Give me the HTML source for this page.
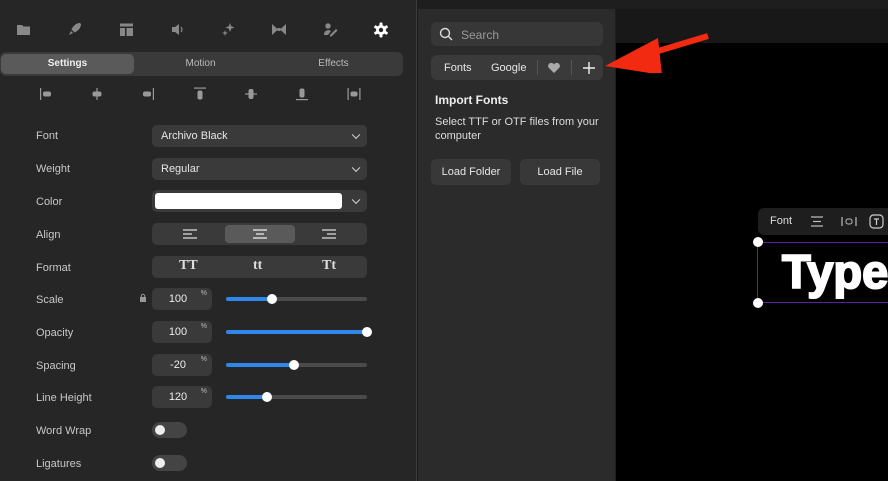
<!DOCTYPE html>
<html><head><meta charset="utf-8"><style>
*{box-sizing:border-box;margin:0;padding:0}
body{width:888px;height:481px;overflow:hidden;background:#1e1e1e;font-family:"Liberation Sans",sans-serif;position:relative;color:#ddd}
.abs{position:absolute}
#left{left:0;top:0;width:416px;height:481px;background:#262626}
#div{left:416px;top:0;width:1px;height:481px;background:#3a3a3a}
#mid{left:418px;top:9px;width:197px;height:472px;background:#2b2b2b}
#cv1{left:616px;top:9px;width:272px;height:34px;background:#181818}
#cv2{left:616px;top:43px;width:272px;height:438px;background:#000}
.lbl{position:absolute;left:36px;font-size:11px;color:#c8c8c8}
.box{position:absolute;background:#3a3a3a;border-radius:5px}
.tx{font-size:11px;color:#e6e6e6}
.chev{position:absolute;right:8px;top:50%;width:6px;height:6px;border-right:1.5px solid #ddd;border-bottom:1.5px solid #ddd;transform:translateY(-70%) rotate(45deg)}
.track{position:absolute;left:226px;width:141px;height:4px;border-radius:2px;background:#4a4a4a}
.fill{position:absolute;left:0;top:0;height:4px;border-radius:2px;background:#2f86eb}
.knob{position:absolute;top:-3px;width:10px;height:10px;border-radius:50%;background:#fff;margin-left:-5px}
.num{position:absolute;left:152px;width:60px;height:22px;background:#3a3a3a;border-radius:5px;font-size:11px;color:#eee;text-align:center;line-height:23px;padding-right:8px}
.num i{position:absolute;right:5px;top:-6px;font-style:normal;font-size:7px;color:#bbb}
.tog{position:absolute;left:152px;width:35px;height:16px;border-radius:8px;background:#444}
.tog:after{content:"";position:absolute;left:3px;top:3px;width:10px;height:10px;border-radius:50%;background:#eee}
.ic{position:absolute;top:22px}
.al{position:absolute;top:86px}
</style></head><body>
<div id="left" class="abs"></div>
<div id="div" class="abs"></div>
<div id="mid" class="abs"></div>
<div id="cv1" class="abs"></div>
<div id="cv2" class="abs"></div>

<svg class="ic" style="left:16px" width="15" height="15" viewBox="0 0 15 15"><path d="M1 3h5l1.5 1.5H14v8.5H1z" fill="#888"/></svg>
<svg class="ic" style="left:67px" width="15" height="15" viewBox="0 0 15 15"><path d="M13 1C9 1 6 4 4.5 7.5L7.5 10.5C11 9 14 6 14 2z" fill="#888"/><path d="M4 9L2 13L6 11z" fill="#888"/></svg>
<svg class="ic" style="left:119px" width="15" height="15" viewBox="0 0 15 15"><rect x="1" y="1.5" width="13" height="3" fill="#888"/><rect x="1" y="6" width="5" height="8" fill="#888"/><rect x="7.5" y="6" width="6.5" height="8" fill="#888"/></svg>
<svg class="ic" style="left:170px" width="15" height="15" viewBox="0 0 15 15"><path d="M2 5h3l4-3v11l-4-3H2z" fill="#888"/><path d="M11 5q2 2.5 0 5" stroke="#888" fill="none" stroke-width="1.2"/></svg>
<svg class="ic" style="left:221px" width="15" height="15" viewBox="0 0 15 15"><path d="M9 1l1.2 3.3L13.5 5.5 10.2 6.7 9 10 7.8 6.7 4.5 5.5 7.8 4.3z" fill="#888"/><path d="M4 8l.8 2.2L7 11l-2.2.8L4 14l-.8-2.2L1 11l2.2-.8z" fill="#888"/></svg>
<svg class="ic" style="left:271px" width="16" height="15" viewBox="0 0 16 15"><path d="M1 2l6 5.5L1 13zM15 2L9 7.5 15 13z" fill="#888"/><rect x="6.5" y="6" width="3" height="3" fill="#888"/></svg>
<svg class="ic" style="left:323px" width="15" height="15" viewBox="0 0 15 15"><circle cx="5" cy="4" r="2.7" fill="#888"/><path d="M1 13q0-5 5-5l2 1-3 4z" fill="#888"/><path d="M7 13l6-6 1.5 1.5-6 6H7z" fill="#888"/></svg>
<svg class="ic" style="left:373px" width="16" height="16" viewBox="0 0 16 16"><g fill="#fff"><circle cx="8" cy="8" r="5"/><rect x="6.5" y="0.5" width="3" height="15" rx="1"/><rect x="6.5" y="0.5" width="3" height="15" rx="1" transform="rotate(60 8 8)"/><rect x="6.5" y="0.5" width="3" height="15" rx="1" transform="rotate(120 8 8)"/></g><circle cx="8" cy="8" r="2.2" fill="#262626"/></svg>

<div class="abs" style="left:0;top:52px;width:403px;height:24px;background:#3a3a3a;border-radius:6px"></div>
<div class="abs" style="left:1px;top:54px;width:133px;height:20px;background:#5a5a5a;border-radius:5px"></div>
<div class="abs tx" style="left:1px;top:58px;width:133px;text-align:center;font-size:10px;font-weight:bold;color:#f0f0f0">Settings</div>
<div class="abs tx" style="left:134px;top:58px;width:133px;text-align:center;font-size:10px;color:#bbb">Motion</div>
<div class="abs tx" style="left:267px;top:58px;width:133px;text-align:center;font-size:10px;color:#bbb">Effects</div>

<svg class="al" style="left:38px" width="16" height="16" viewBox="0 0 16 16"><rect x="2" y="2" width="1.2" height="12" fill="#999"/><rect x="5" y="5.5" width="8" height="5" rx="2" fill="#999"/></svg>
<svg class="al" style="left:89px" width="16" height="16" viewBox="0 0 16 16"><rect x="7.4" y="2" width="1.2" height="12" fill="#999"/><rect x="3.5" y="5.5" width="9" height="5" rx="2" fill="#999"/></svg>
<svg class="al" style="left:140px" width="16" height="16" viewBox="0 0 16 16"><rect x="12.8" y="2" width="1.2" height="12" fill="#999"/><rect x="3" y="5.5" width="8" height="5" rx="2" fill="#999"/></svg>
<svg class="al" style="left:192px" width="16" height="16" viewBox="0 0 16 16"><rect x="2" y="1.5" width="12" height="1.2" fill="#999"/><rect x="5.5" y="4.5" width="5" height="9" rx="2" fill="#999"/></svg>
<svg class="al" style="left:243px" width="16" height="16" viewBox="0 0 16 16"><rect x="2" y="7.4" width="12" height="1.2" fill="#999"/><rect x="5.5" y="3" width="5" height="10" rx="2" fill="#999"/></svg>
<svg class="al" style="left:294px" width="16" height="16" viewBox="0 0 16 16"><rect x="2" y="13" width="12" height="1.2" fill="#999"/><rect x="5.5" y="2.5" width="5" height="9" rx="2" fill="#999"/></svg>
<svg class="al" style="left:346px" width="16" height="16" viewBox="0 0 16 16"><rect x="1.5" y="2" width="1.2" height="12" fill="#999"/><rect x="13.3" y="2" width="1.2" height="12" fill="#999"/><rect x="4.5" y="5.5" width="7" height="5" rx="2" fill="#999"/></svg>

<div class="lbl" style="top:130px">Font</div>
<div class="box" style="left:152px;top:125px;width:215px;height:22px"><span class="abs tx" style="left:9px;top:5px">Archivo Black</span><span class="chev"></span></div>
<div class="lbl" style="top:163px">Weight</div>
<div class="box" style="left:152px;top:158px;width:215px;height:22px"><span class="abs tx" style="left:9px;top:5px">Regular</span><span class="chev"></span></div>
<div class="lbl" style="top:196px">Color</div>
<div class="box" style="left:152px;top:190px;width:215px;height:22px"><span class="abs" style="left:3px;top:3px;width:187px;height:16px;background:#fff;border-radius:3px"></span><span class="chev"></span></div>
<div class="lbl" style="top:229px">Align</div>
<div class="box" style="left:152px;top:223px;width:215px;height:22px">
<span class="abs" style="left:73px;top:2px;width:70px;height:18px;background:#5a5a5a;border-radius:4px"></span>
<svg class="abs" style="left:30px;top:5px" width="16" height="12"><path d="M1 2h14M1 6h9M1 10h14" stroke="#ddd" stroke-width="1.2"/></svg>
<svg class="abs" style="left:100px;top:5px" width="16" height="12"><path d="M1 2h14M4 6h8M1 10h14" stroke="#eee" stroke-width="1.2"/></svg>
<svg class="abs" style="left:169px;top:5px" width="16" height="12"><path d="M1 2h14M6 6h9M1 10h14" stroke="#ddd" stroke-width="1.2"/></svg>
</div>
<div class="lbl" style="top:262px">Format</div>
<div class="box" style="left:152px;top:256px;width:215px;height:22px;font-family:'Liberation Serif',serif;font-weight:bold;color:#ddd;font-size:14px">
<span class="abs" style="left:27px;top:2px">TT</span><span class="abs" style="left:101px;top:2px">tt</span><span class="abs" style="left:170px;top:2px">Tt</span></div>

<div class="lbl" style="top:294px">Scale</div>
<svg class="abs" style="left:139px;top:293px" width="8" height="9"><rect x="1" y="4" width="6" height="5" fill="#999"/><path d="M2.3 4.5V3a1.7 1.7 0 0 1 3.4 0v1.5" stroke="#999" fill="none"/></svg>
<div class="num" style="top:288px">100<i>%</i></div>
<div class="track" style="top:297px"><div class="fill" style="width:46px"></div><div class="knob" style="left:46px"></div></div>
<div class="lbl" style="top:327px">Opacity</div>
<div class="num" style="top:321px">100<i>%</i></div>
<div class="track" style="top:330px"><div class="fill" style="width:141px"></div><div class="knob" style="left:141px"></div></div>
<div class="lbl" style="top:360px">Spacing</div>
<div class="num" style="top:354px">-20<i>%</i></div>
<div class="track" style="top:363px"><div class="fill" style="width:68px"></div><div class="knob" style="left:68px"></div></div>
<div class="lbl" style="top:392px">Line Height</div>
<div class="num" style="top:386px">120<i>%</i></div>
<div class="track" style="top:395px"><div class="fill" style="width:41px"></div><div class="knob" style="left:41px"></div></div>
<div class="lbl" style="top:425px">Word Wrap</div>
<div class="tog" style="top:422px"></div>
<div class="lbl" style="top:458px">Ligatures</div>
<div class="tog" style="top:455px"></div>

<div class="abs" style="left:431px;top:22px;width:172px;height:24px;background:#373737;border-radius:6px"></div>
<svg class="abs" style="left:439px;top:27px" width="14" height="14"><circle cx="6" cy="6" r="4.5" stroke="#ddd" stroke-width="1.4" fill="none"/><path d="M9.3 9.3L13 13" stroke="#ddd" stroke-width="1.4"/></svg>
<div class="abs" style="left:461px;top:28px;font-size:12px;color:#999">Search</div>
<div class="abs" style="left:431px;top:55px;width:172px;height:25px;background:#3a3a3a;border-radius:6px"></div>
<div class="abs tx" style="left:444px;top:62px">Fonts</div>
<div class="abs tx" style="left:491px;top:62px">Google</div>
<div class="abs" style="left:537px;top:60px;width:1px;height:15px;background:#555"></div>
<svg class="abs" style="left:547px;top:62px" width="14" height="12"><path d="M7 11L1.5 5.5A3 3 0 0 1 7 2.5A3 3 0 0 1 12.5 5.5z" fill="#aaa"/></svg>
<div class="abs" style="left:571px;top:60px;width:1px;height:15px;background:#555"></div>
<svg class="abs" style="left:583px;top:62px" width="12" height="12"><path d="M6 0v12M0 6h12" stroke="#eee" stroke-width="1.4"/></svg>
<div class="abs" style="left:435px;top:93px;font-size:12px;font-weight:bold;color:#eee">Import Fonts</div>
<div class="abs" style="left:435px;top:115px;width:175px;font-size:11px;line-height:14px;color:#ddd">Select TTF or OTF files from your computer</div>
<div class="abs" style="left:431px;top:159px;width:80px;height:26px;background:#383838;border-radius:5px;font-size:11px;color:#e6e6e6;text-align:center;line-height:26px">Load Folder</div>
<div class="abs" style="left:520px;top:159px;width:80px;height:26px;background:#383838;border-radius:5px;font-size:11px;color:#e6e6e6;text-align:center;line-height:26px">Load File</div>

<svg class="abs" style="left:600px;top:28px" width="115" height="45"><path d="M108 8L45 27" stroke="#f32a12" stroke-width="6"/><path d="M5 38L58 10L62 47z" fill="#f32a12"/></svg>

<div class="abs" style="left:758px;top:208px;width:140px;height:27px;background:#1e1e1e;border-radius:6px"></div>
<div class="abs tx" style="left:770px;top:215px;color:#ddd">Font</div>
<svg class="abs" style="left:810px;top:216px" width="14" height="11"><path d="M1 1h12M3 5.5h8M1 10h12" stroke="#bbb" stroke-width="1.2"/></svg>
<svg class="abs" style="left:841px;top:216px" width="16" height="11"><path d="M1 1v9M15 1v9" stroke="#bbb" stroke-width="1.2"/><rect x="5" y="3" width="6" height="5" rx="2" stroke="#bbb" fill="none"/></svg>
<svg class="abs" style="left:869px;top:214px" width="16" height="16"><rect x="1" y="1" width="13" height="13" rx="3.5" stroke="#ccc" stroke-width="1.2" fill="none"/><path d="M5 5h5M7.5 5v6" stroke="#ccc" stroke-width="1.2"/></svg>
<div class="abs" style="left:757px;top:242px;width:140px;height:61px;border:1.3px solid #5b1fa3;border-right:none"></div>
<div class="abs" style="left:753px;top:237px;width:10px;height:10px;border-radius:50%;background:#fff"></div>
<div class="abs" style="left:753px;top:298px;width:10px;height:10px;border-radius:50%;background:#fff"></div>
<div class="abs" style="left:782px;top:245px;font-size:47px;font-weight:900;color:#fff;-webkit-text-stroke:2px #fff;font-family:'Liberation Sans',sans-serif;letter-spacing:0px;line-height:54px;white-space:nowrap">Type</div>
</body></html>
